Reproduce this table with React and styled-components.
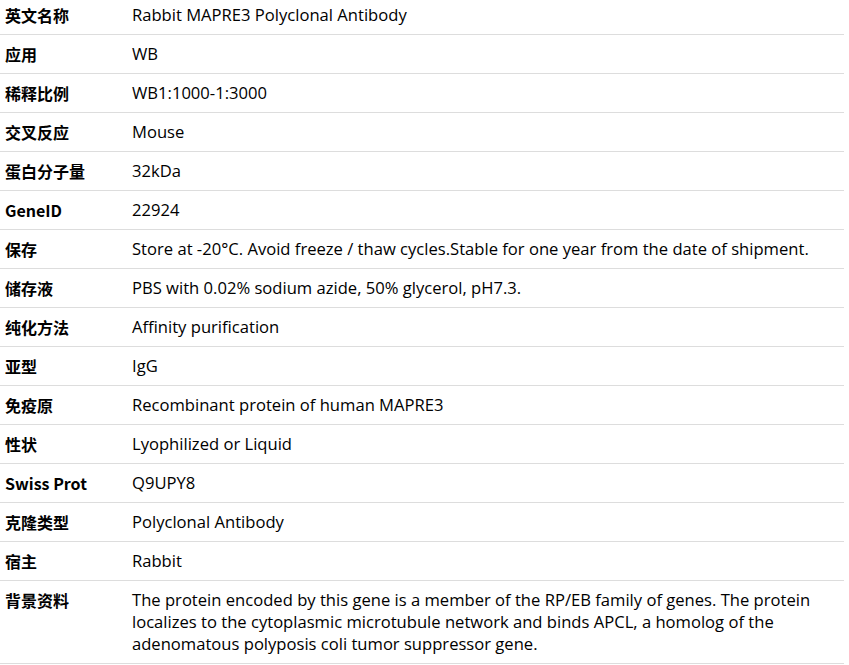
import React from 'react';
import styled, { createGlobalStyle } from 'styled-components';

const GlobalStyle = createGlobalStyle`
  body {
    margin: 0;
    padding: 0;
    background: #fff;
    color: #000;
    font-family: "Open Sans", "Noto Sans CJK SC", sans-serif;
  }
`;

const Table = styled.div`
  width: 844px;
  display: flex;
  flex-direction: column;
`;

const Row = styled.div`
  display: grid;
  grid-template-columns: 132px 1fr;
  border-bottom: 1px solid #dddddd;
  padding: 8px 0;
  line-height: 22px;

  &:first-child {
    padding-top: 4px;
  }
`;

const Label = styled.div`
  padding-left: 5px;
  font-size: 16px;
  font-weight: bold;
  font-family: "Noto Sans CJK SC", "Open Sans", sans-serif;
`;

const Value = styled.div`
  padding-right: 8px;
  font-size: 16.6px;
`;

const rows = [
  ['英文名称', 'Rabbit MAPRE3 Polyclonal Antibody'],
  ['应用', 'WB'],
  ['稀释比例', 'WB1:1000-1:3000'],
  ['交叉反应', 'Mouse'],
  ['蛋白分子量', '32kDa'],
  ['GeneID', '22924'],
  ['保存', 'Store at -20°C. Avoid freeze / thaw cycles.Stable for one year from the date of shipment.'],
  ['储存液', 'PBS with 0.02% sodium azide, 50% glycerol, pH7.3.'],
  ['纯化方法', 'Affinity purification'],
  ['亚型', 'IgG'],
  ['免疫原', 'Recombinant protein of human MAPRE3'],
  ['性状', 'Lyophilized or Liquid'],
  ['Swiss Prot', 'Q9UPY8'],
  ['克隆类型', 'Polyclonal Antibody'],
  ['宿主', 'Rabbit'],
  ['背景资料', 'The protein encoded by this gene is a member of the RP/EB family of genes. The protein localizes to the cytoplasmic microtubule network and binds APCL, a homolog of the adenomatous polyposis coli tumor suppressor gene.'],
];

export default function App() {
  return (
    <>
      <GlobalStyle />
      <Table>
        {rows.map(([label, value]) => (
          <Row key={label}>
            <Label>{label}</Label>
            <Value>{value}</Value>
          </Row>
        ))}
      </Table>
    </>
  );
}
